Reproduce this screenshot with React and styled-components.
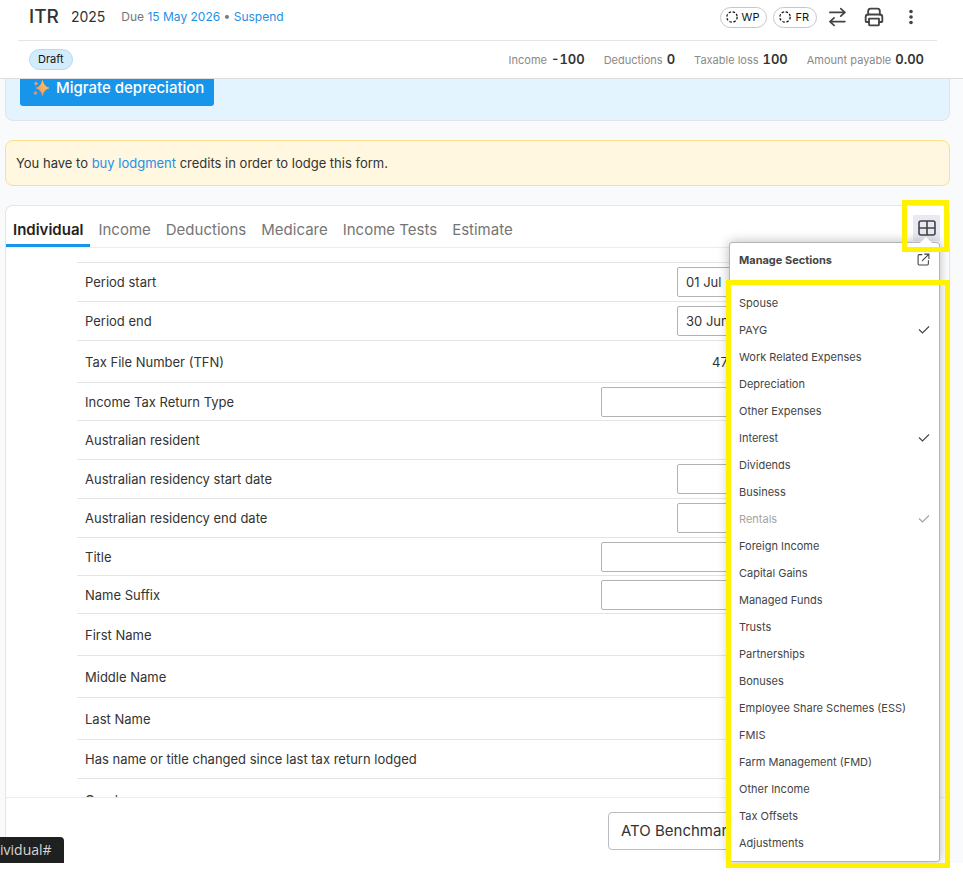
import React from "react"
import styled, { createGlobalStyle, css } from "styled-components"

const GlobalStyle = createGlobalStyle`
    * {
        box-sizing: border-box;
    }
    body {
        margin: 0;
        background-color: #ffffff;
        color: #333333;
        font-family: Inter, "Liberation Sans", sans-serif;
        font-size: 13px;
        line-height: 20px;
    }
    button, input, select {
        font: inherit;
        color: inherit;
    }
`

const Page = styled.div`
    display: flex;
    flex-direction: column;
    height: 100vh;
    padding-bottom: 18px;
`

const Header = styled.header`
    position: relative;
    z-index: 2;
    flex: none;
    padding: 0 26px 0 18px;
    background-color: #ffffff;
    border-bottom: 1px solid #dcdee0;
`

const HeaderRow = styled.div`
    display: flex;
    align-items: center;
    justify-content: space-between;
    padding: 0 13px 0 11px;
`

const TitleRow = styled(HeaderRow)`
    height: 41px;
    padding-bottom: 6px;
    border-bottom: 1px solid #e4e5e7;
`

const StatusRow = styled(HeaderRow)`
    height: 37px;
`

const TitleGroup = styled.div`
    display: flex;
    align-items: center;
`

const Title = styled.h1`
    margin: 0;
    font-size: 19px;
    font-weight: 500;
`

const Year = styled.span`
    margin-left: 12px;
    font-size: 14px;
`

const Due = styled.span`
    margin-left: 16px;
    font-size: 12px;
    color: #777777;
`

const Link = styled.a`
    color: #1e90e6;
    text-decoration: none;
`

const Tools = styled.div`
    display: flex;
    align-items: center;
`

const PillButton = styled.button`
    display: flex;
    align-items: center;
    gap: 4px;
    height: 21px;
    margin-right: 6px;
    padding: 0 7px 0 5px;
    border: 1px solid #c3c7cc;
    border-radius: 11px;
    background-color: #ffffff;
    color: #111111;
    font-size: 11px;
`

const ToolButton = styled.button`
    display: flex;
    align-items: center;
    justify-content: center;
    width: 27px;
    height: 26px;
    padding: 0;
    border: none;
    background-color: ${props => props.$active ? "#e9e9f3" : "transparent"};
    color: #444444;
`

const HeaderTools = styled.div`
    display: flex;
    gap: 10px;
`

const Draft = styled.span`
    height: 21px;
    padding: 0 8px;
    border: 1px solid #b0daf5;
    border-radius: 11px;
    background-color: #d3ecfb;
    color: #111111;
    font-size: 11px;
    line-height: 19px;
`

const Totals = styled.dl`
    display: flex;
    gap: 19px;
    margin: 0;
`

const Total = styled.div`
    display: flex;
    align-items: baseline;
    gap: 4px;

    dt {
        font-size: 11px;
        color: #8a8a8a;
    }
    dd {
        margin: 0;
        font-weight: 600;
        font-variant-numeric: tabular-nums;
    }
`

const Main = styled.main`
    display: flex;
    flex: 1;
    flex-direction: column;
    min-height: 0;
    padding: 0 13px 0 5px;
    background-color: #f9fafc;
`

const MigrateBanner = styled.section`
    flex: none;
    margin-top: -24px;
    padding: 14px;
    border: 1px solid #dfe5ea;
    border-radius: 8px;
    background-color: #e3f4ff;
`

const MigrateButton = styled.button`
    display: flex;
    align-items: center;
    gap: 6px;
    height: 36px;
    padding: 0 10px 0 12px;
    border: none;
    border-radius: 3px;
    background-color: #1795eb;
    color: #ffffff;
    font-size: 15px;
    font-weight: 500;
`

const CreditsBanner = styled.p`
    flex: none;
    margin: 19px 0;
    padding: 12px 10px;
    border: 1px solid #fbe08b;
    border-radius: 8px;
    background-color: #fff7df;
`

const Card = styled.section`
    display: flex;
    flex: 1;
    flex-direction: column;
    min-height: 0;
    border: 1px solid #e4e6e9;
    border-bottom: none;
    border-radius: 8px 8px 0 0;
    background-color: #ffffff;
`

const TabBar = styled.div`
    display: flex;
    align-items: flex-end;
    justify-content: space-between;
    height: 42px;
    padding-right: 9px;
    border-bottom: 1px solid #ececee;
`

const Tabs = styled.nav`
    display: flex;
    gap: 1px;
`

const Tab = styled.a`
    height: 35px;
    padding: 0 7px;
    color: #757575;
    font-size: 15px;
    line-height: 35px;
    text-decoration: none;

    ${props => props.$active && css`
        border-bottom: 3px solid #1795eb;
        color: #222222;
        font-weight: 600;
    `}
`

const SectionsAnchor = styled.div`
    position: relative;
    z-index: 3;
    padding-bottom: 6px;
`

const Outline = styled.div`
    position: absolute;
    border: 5px solid #fff200;
    pointer-events: none;
`

const ButtonOutline = styled(Outline)`
    inset: -15px -9px -5px -11px;
`

const ListOutline = styled(Outline)`
    inset: 37px -11px -7px -4px;
`

const Menu = styled.div`
    position: absolute;
    top: 27px;
    right: 0;
    width: 211px;
    padding-bottom: 5px;
    border: 1px solid #b4b4b4;
    border-radius: 3px;
    background-color: #ffffff;
    box-shadow: 0 0 12px rgba(0, 0, 0, 0.28);
    color: #444444;
    font-size: 11px;

    &::before {
        content: "";
        position: absolute;
        top: -6px;
        right: 7px;
        border-right: 6px solid transparent;
        border-bottom: 6px solid #ffffff;
        border-left: 6px solid transparent;
    }
`

const MenuHeader = styled.div`
    display: flex;
    align-items: center;
    justify-content: space-between;
    height: 33px;
    padding: 0 9px;
    font-weight: 700;
`

const MenuList = styled.ul`
    margin: 0;
    padding: 13px 0 0;
    list-style: none;
`

const MenuItem = styled.button`
    display: flex;
    align-items: center;
    justify-content: space-between;
    width: 100%;
    height: 27px;
    padding: 0 9px;
    border: none;
    background: none;
    color: ${props => props.disabled ? "#a3a3a3" : "#444444"};
    text-align: left;
`

const FormArea = styled.div`
    flex: 1;
    min-height: 0;
    padding: 14px 72px 0 71px;
    overflow: hidden;
`

const Row = styled.div`
    display: flex;
    align-items: center;
    justify-content: space-between;
    height: ${props => props.$height}px;
    padding: 0 8px;
    border-top: 1px solid #e2e4e8;
`

const Field = styled.input`
    height: 30px;
    width: 192px;
    padding: 0 8px;
    border: 1px solid #b3b3b3;
    border-radius: 2px;
    background-color: #ffffff;
`

const SelectField = styled(Field)`
    appearance: none;
    width: 268px;
`

const ReadOnly = styled.output`
    width: 157px;
`

const Footer = styled.footer`
    display: flex;
    flex: none;
    justify-content: flex-end;
    height: 66px;
    padding: 14px 180px 0 0;
    border-top: 1px solid #ececee;
`

const FooterButton = styled.button`
    width: 161px;
    height: 38px;
    padding: 0 12px;
    border: 1px solid #b9bdc2;
    border-radius: 4px;
    background-color: #ffffff;
    font-size: 15px;
    text-align: left;
    white-space: nowrap;
`

const LinkHint = styled.div`
    position: absolute;
    bottom: 18px;
    left: 0;
    z-index: 4;
    height: 26px;
    padding: 0 12px 0 0;
    border-radius: 0 4px 0 0;
    background-color: #1f2020;
    color: #d6d6d6;
    font-family: "Open Sans", sans-serif;
    font-size: 14px;
    line-height: 26px;
`

const Stroke = ({ size = 20, width = 2, children, ...rest }) => (
    <svg width={size} height={size} viewBox="0 0 24 24" fill="none" stroke="currentColor"
        strokeWidth={width} strokeLinecap="round" strokeLinejoin="round" aria-hidden="true" {...rest}>
        {children}
    </svg>
)

const DashedCircle = () => (
    <Stroke size={12} width={2.4} strokeLinecap="butt">
        <circle cx="12" cy="12" r="10.4" strokeDasharray="5 3.17" />
    </Stroke>
)

const SwapIcon = () => (
    <Stroke>
        <path d="M3.500 6.500h18M16.500 2l5 4.500-5 4.500M21.500 17.500h-18M8.500 13l-5 4.500 5 4.500" />
    </Stroke>
)

const PrintIcon = () => (
    <Stroke width={2.2}>
        <path d="M5 9V5a3 3 0 0 1 3-3h8a3 3 0 0 1 3 3v4" />
        <path d="M6 18H3a1 1 0 0 1-1-1v-5a3 3 0 0 1 3-3h14a3 3 0 0 1 3 3v5a1 1 0 0 1-1 1h-3" />
        <path d="M6 14h12v7a1 1 0 0 1-1 1H7a1 1 0 0 1-1-1z" />
    </Stroke>
)

const MoreIcon = () => (
    <svg width="18" height="18" viewBox="0 0 18 18" fill="currentColor" aria-hidden="true">
        <circle cx="9" cy="3.500" r="1.800" />
        <circle cx="9" cy="9" r="1.800" />
        <circle cx="9" cy="14.500" r="1.800" />
    </svg>
)

const GridIcon = () => (
    <svg width="18" height="16" viewBox="0 0 18 16" fill="none" stroke="currentColor" strokeWidth="1.6" aria-hidden="true">
        <rect x="1" y="1" width="16" height="14" rx="2" />
        <path d="M9 1v14M1 8h16" />
    </svg>
)

const ExternalIcon = () => (
    <Stroke size={13} width={2}>
        <path d="M9 3H4a2 2 0 0 0-2 2v15a2 2 0 0 0 2 2h15a2 2 0 0 0 2-2v-6M14 2h8v8M22 2L10 14" />
    </Stroke>
)

const CheckIcon = () => (
    <svg width="12" height="10" viewBox="0 0 12 10" fill="none" stroke="currentColor" strokeWidth="1.1" aria-hidden="true">
        <path d="M1 4.500l3.500 3.500 6.500-6.500" />
    </svg>
)

const SparklesIcon = () => (
    <svg width="18" height="18" viewBox="0 0 18 18" aria-hidden="true">
        <defs>
            <linearGradient id="sparkle" x1="0" y1="1" x2="1" y2="0">
                <stop offset="0" stopColor="#f98a5c" />
                <stop offset="1" stopColor="#ffd058" />
            </linearGradient>
        </defs>
        <path d="M10.500 1.500q1.200 6 6.500 7.500q-5.300 1.500-6.500 7.500q-1.200-6-6.500-7.500q5.300-1.500 6.500-7.500z"
            fill="url(#sparkle)" stroke="url(#sparkle)" strokeWidth="0.6" strokeLinejoin="round" />
        <path d="M4 2q.6 2 2.500 2.500q-1.900 .5-2.500 2.500q-.6-2-2.500-2.500q1.900-.5 2.500-2.500z" fill="#fb9a58" />
        <path d="M3.500 11.500q.6 2 2.500 2.500q-1.900 .5-2.500 2.500q-.6-2-2.500-2.500q1.900-.5 2.500-2.500z" fill="#f98f58" />
    </svg>
)

const totals = [
    ["Income", "-100"],
    ["Deductions", "0"],
    ["Taxable loss", "100"],
    ["Amount payable", "0.00"],
]

const tabs = ["Individual", "Income", "Deductions", "Medicare", "Income Tests", "Estimate"]

const sections = [
    { name: "Spouse" },
    { name: "PAYG", checked: true },
    { name: "Work Related Expenses" },
    { name: "Depreciation" },
    { name: "Other Expenses" },
    { name: "Interest", checked: true },
    { name: "Dividends" },
    { name: "Business" },
    { name: "Rentals", checked: true, disabled: true },
    { name: "Foreign Income" },
    { name: "Capital Gains" },
    { name: "Managed Funds" },
    { name: "Trusts" },
    { name: "Partnerships" },
    { name: "Bonuses" },
    { name: "Employee Share Schemes (ESS)" },
    { name: "FMIS" },
    { name: "Farm Management (FMD)" },
    { name: "Other Income" },
    { name: "Tax Offsets" },
    { name: "Adjustments" },
]

const rowHeights = { date: 39, select: 38, flag: 39, text: 42 }

const fields = [
    { id: "period-start", label: "Period start", type: "date", value: "01 Jul" },
    { id: "period-end", label: "Period end", type: "date", value: "30 Jun" },
    { id: "tfn", label: "Tax File Number (TFN)", type: "text", value: "47" },
    { id: "return-type", label: "Income Tax Return Type", type: "select" },
    { id: "resident", label: "Australian resident", type: "flag" },
    { id: "residency-start", label: "Australian residency start date", type: "date" },
    { id: "residency-end", label: "Australian residency end date", type: "date" },
    { id: "title", label: "Title", type: "select" },
    { id: "suffix", label: "Name Suffix", type: "select" },
    { id: "first-name", label: "First Name", type: "text" },
    { id: "middle-name", label: "Middle Name", type: "text" },
    { id: "last-name", label: "Last Name", type: "text" },
    { id: "name-changed", label: "Has name or title changed since last tax return lodged", type: "flag" },
    { id: "gender", label: "Gender", type: "text" },
]

const FormRow = ({ id, label, type, value }) => (
    <Row $height={rowHeights[type]}>
        <label htmlFor={id}>{label}</label>
        {type === "date" && <Field id={id} defaultValue={value} />}
        {type === "select" && <SelectField as="select" id={id} />}
        {(type === "text" || type === "flag") && <ReadOnly id={id}>{value}</ReadOnly>}
    </Row>
)

const SectionsMenu = () => (
    <Menu>
        <MenuHeader>
            Manage Sections
            <ExternalIcon />
        </MenuHeader>
        <MenuList>
            {sections.map(({ name, checked, disabled }) => (
                <li key={name}>
                    <MenuItem type="button" disabled={disabled}>
                        {name}
                        {checked && <CheckIcon />}
                    </MenuItem>
                </li>
            ))}
        </MenuList>
        <ListOutline />
    </Menu>
)

const App = () => (
    <Page>
        <GlobalStyle />
        <Header>
            <TitleRow>
                <TitleGroup>
                    <Title>ITR</Title>
                    <Year>2025</Year>
                    <Due>
                        Due <Link href="#due">15 May 2026</Link> • <Link href="#suspend">Suspend</Link>
                    </Due>
                </TitleGroup>
                <Tools>
                    <PillButton type="button"><DashedCircle />WP</PillButton>
                    <PillButton type="button"><DashedCircle />FR</PillButton>
                    <HeaderTools>
                        <ToolButton type="button" aria-label="Transfer"><SwapIcon /></ToolButton>
                        <ToolButton type="button" aria-label="Print"><PrintIcon /></ToolButton>
                        <ToolButton type="button" aria-label="More"><MoreIcon /></ToolButton>
                    </HeaderTools>
                </Tools>
            </TitleRow>
            <StatusRow>
                <Draft>Draft</Draft>
                <Totals>
                    {totals.map(([name, amount]) => (
                        <Total key={name}>
                            <dt>{name}</dt>
                            <dd>{amount}</dd>
                        </Total>
                    ))}
                </Totals>
            </StatusRow>
        </Header>
        <Main>
            <MigrateBanner>
                <MigrateButton type="button"><SparklesIcon />Migrate depreciation</MigrateButton>
            </MigrateBanner>
            <CreditsBanner>
                You have to <Link href="#lodgment">buy lodgment</Link> credits in order to lodge this form.
            </CreditsBanner>
            <Card>
                <TabBar>
                    <Tabs>
                        {tabs.map((name, i) => (
                            <Tab key={name} href="#" $active={i === 0}>{name}</Tab>
                        ))}
                    </Tabs>
                    <SectionsAnchor>
                        <ToolButton type="button" $active aria-label="Manage sections"><GridIcon /></ToolButton>
                        <SectionsMenu />
                        <ButtonOutline />
                    </SectionsAnchor>
                </TabBar>
                <FormArea>
                    {fields.map(field => <FormRow key={field.id} {...field} />)}
                </FormArea>
                <Footer>
                    <FooterButton type="button">ATO Benchmarks</FooterButton>
                </Footer>
            </Card>
        </Main>
        <LinkHint>ividual#</LinkHint>
    </Page>
)

export default App
